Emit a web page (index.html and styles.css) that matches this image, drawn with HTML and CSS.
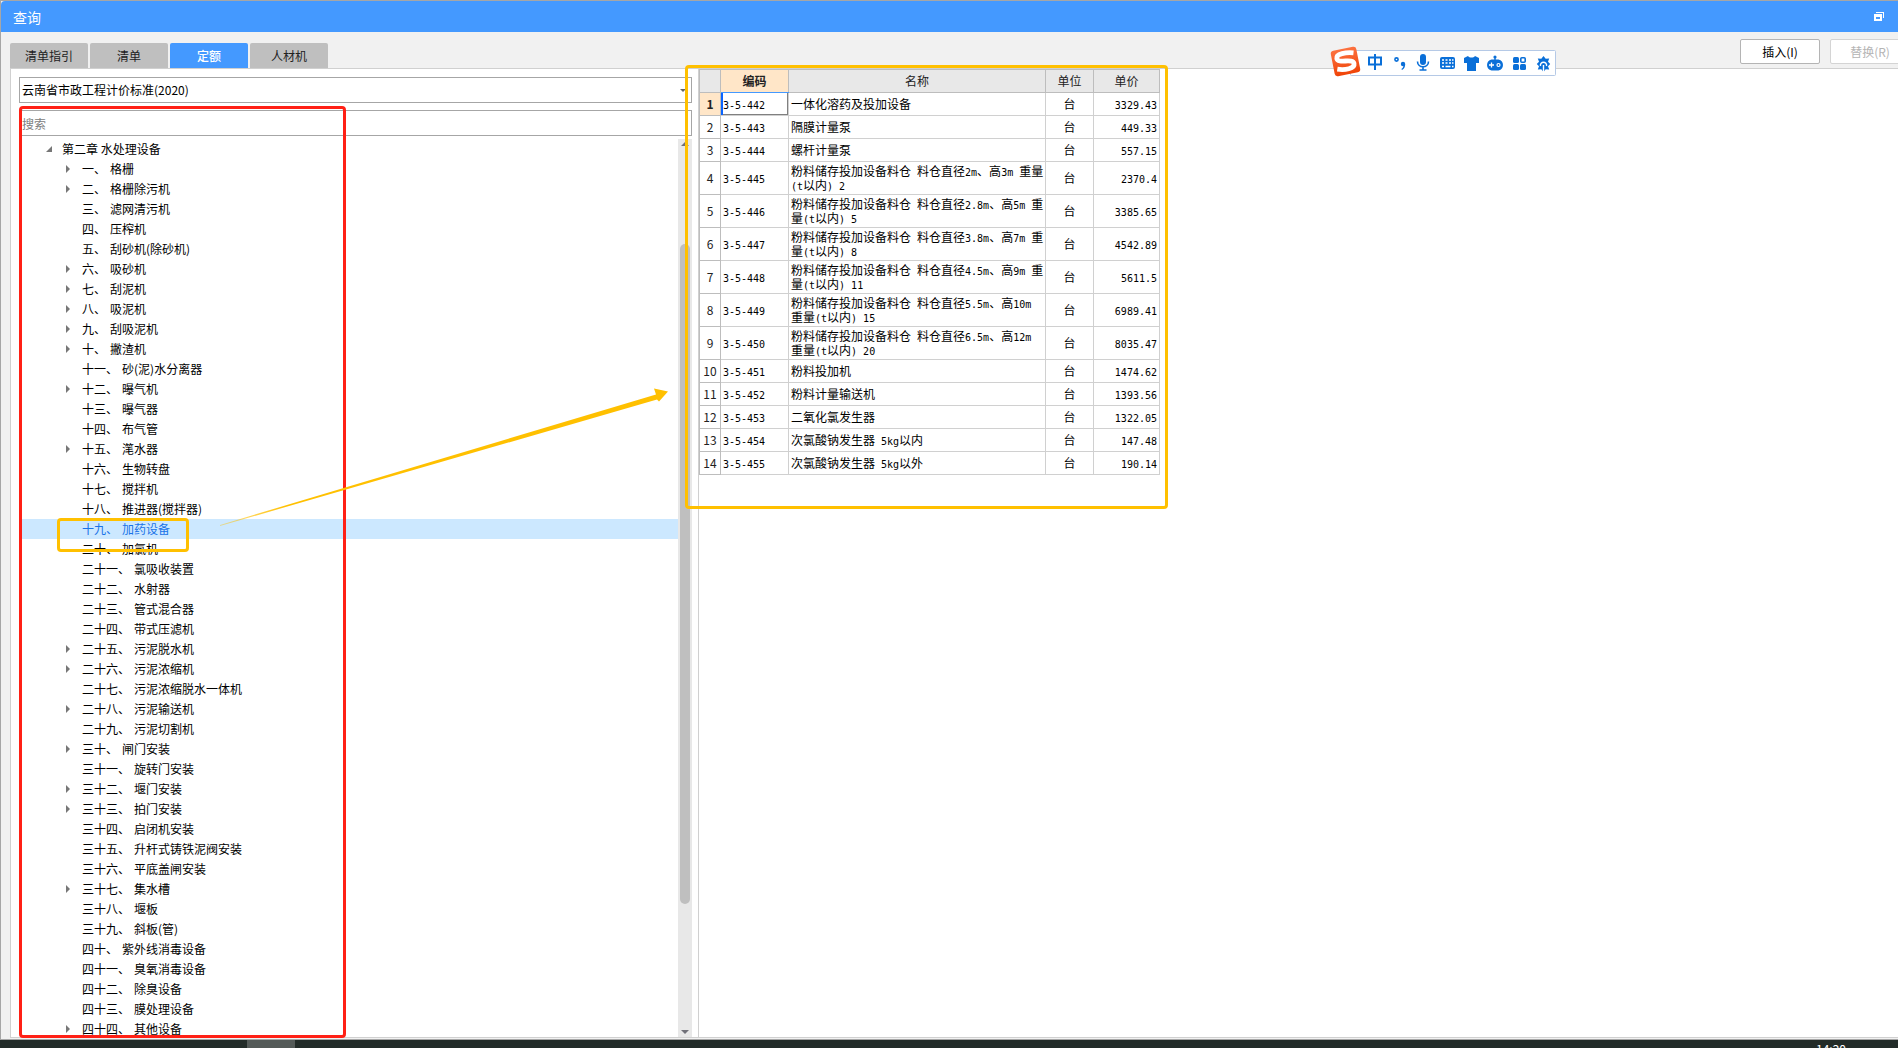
FILE: index.html
```html
<!DOCTYPE html>
<html lang="zh-CN">
<head>
<meta charset="utf-8">
<title>查询</title>
<link rel="stylesheet" href="styles.css">
</head>
<body>
<div class="window">
  <header class="titlebar">
    <h1 class="title">查询</h1>
    <button class="restore" type="button" aria-label="还原">
      <svg width="10" height="9" viewBox="0 0 10 9"><path d="M2 0h8v6H9V1H2z" fill="#fff"/><path d="M0 2h8v7H0zM2 5v2h4V5z" fill="#fff" fill-rule="evenodd"/></svg>
    </button>
  </header>

  <div class="toolbar">
    <nav class="tabs">
      <button class="tab" type="button">清单指引</button>
      <button class="tab" type="button">清单</button>
      <button class="tab active" type="button">定额</button>
      <button class="tab" type="button">人材机</button>
    </nav>
    <div class="actions">
      <button class="action" type="button">插入(I)</button>
      <button class="action" type="button" disabled>替换(R)</button>
    </div>
  </div>

  <main class="panel">
    <section class="side">
      <div class="field">
        <select class="control" aria-label="定额库"><option>云南省市政工程计价标准(2020)</option></select>
        <i class="caret"></i>
      </div>
      <input class="control search" type="text" placeholder="搜索" aria-label="搜索">
      <div class="tree-area">
        <ul class="tree">
          <li class="node root">第二章 水处理设备</li>
          <li class="node branch"><span>一、</span><span>格栅</span></li>
          <li class="node branch"><span>二、</span><span>格栅除污机</span></li>
          <li class="node"><span>三、</span><span>滤网清污机</span></li>
          <li class="node"><span>四、</span><span>压榨机</span></li>
          <li class="node"><span>五、</span><span>刮砂机(除砂机)</span></li>
          <li class="node branch"><span>六、</span><span>吸砂机</span></li>
          <li class="node branch"><span>七、</span><span>刮泥机</span></li>
          <li class="node branch"><span>八、</span><span>吸泥机</span></li>
          <li class="node branch"><span>九、</span><span>刮吸泥机</span></li>
          <li class="node branch"><span>十、</span><span>撇渣机</span></li>
          <li class="node"><span>十一、</span><span>砂(泥)水分离器</span></li>
          <li class="node branch"><span>十二、</span><span>曝气机</span></li>
          <li class="node"><span>十三、</span><span>曝气器</span></li>
          <li class="node"><span>十四、</span><span>布气管</span></li>
          <li class="node branch"><span>十五、</span><span>滗水器</span></li>
          <li class="node"><span>十六、</span><span>生物转盘</span></li>
          <li class="node"><span>十七、</span><span>搅拌机</span></li>
          <li class="node"><span>十八、</span><span>推进器(搅拌器)</span></li>
          <li class="node selected"><span>十九、</span><span>加药设备</span></li>
          <li class="node"><span>二十、</span><span>加氯机</span></li>
          <li class="node"><span>二十一、</span><span>氯吸收装置</span></li>
          <li class="node"><span>二十二、</span><span>水射器</span></li>
          <li class="node"><span>二十三、</span><span>管式混合器</span></li>
          <li class="node"><span>二十四、</span><span>带式压滤机</span></li>
          <li class="node branch"><span>二十五、</span><span>污泥脱水机</span></li>
          <li class="node branch"><span>二十六、</span><span>污泥浓缩机</span></li>
          <li class="node"><span>二十七、</span><span>污泥浓缩脱水一体机</span></li>
          <li class="node branch"><span>二十八、</span><span>污泥输送机</span></li>
          <li class="node"><span>二十九、</span><span>污泥切割机</span></li>
          <li class="node branch"><span>三十、</span><span>闸门安装</span></li>
          <li class="node"><span>三十一、</span><span>旋转门安装</span></li>
          <li class="node branch"><span>三十二、</span><span>堰门安装</span></li>
          <li class="node branch"><span>三十三、</span><span>拍门安装</span></li>
          <li class="node"><span>三十四、</span><span>启闭机安装</span></li>
          <li class="node"><span>三十五、</span><span>升杆式铸铁泥阀安装</span></li>
          <li class="node"><span>三十六、</span><span>平底盖闸安装</span></li>
          <li class="node branch"><span>三十七、</span><span>集水槽</span></li>
          <li class="node"><span>三十八、</span><span>堰板</span></li>
          <li class="node"><span>三十九、</span><span>斜板(管)</span></li>
          <li class="node"><span>四十、</span><span>紫外线消毒设备</span></li>
          <li class="node"><span>四十一、</span><span>臭氧消毒设备</span></li>
          <li class="node"><span>四十二、</span><span>除臭设备</span></li>
          <li class="node"><span>四十三、</span><span>膜处理设备</span></li>
          <li class="node branch"><span>四十四、</span><span>其他设备</span></li>
        </ul>
        <div class="scrollbar"><i class="up"></i><i class="thumb"></i><i class="down"></i></div>
      </div>
    </section>

    <section class="content">
      <table class="grid">
        <colgroup><col class="c-idx"><col class="c-code"><col class="c-name"><col class="c-unit"><col class="c-price"></colgroup>
        <thead>
          <tr><th></th><th class="current">编码</th><th>名称</th><th>单位</th><th>单价</th></tr>
        </thead>
        <tbody>
          <tr><th class="current">1</th><td class="focus"><b>3-5-442</b></td><td>一体化溶药及投加设备</td><td>台</td><td><b>3329.43</b></td></tr>
          <tr><th>2</th><td><b>3-5-443</b></td><td>隔膜计量泵</td><td>台</td><td><b>449.33</b></td></tr>
          <tr><th>3</th><td><b>3-5-444</b></td><td>螺杆计量泵</td><td>台</td><td><b>557.15</b></td></tr>
          <tr class="tall"><th>4</th><td><b>3-5-445</b></td><td>粉料储存投加设备料仓<b> </b>料仓直径<b>2m</b>、高<b>3m </b>重量<br><b>(t</b>以内<b>) 2</b></td><td>台</td><td><b>2370.4</b></td></tr>
          <tr class="tall"><th>5</th><td><b>3-5-446</b></td><td>粉料储存投加设备料仓<b> </b>料仓直径<b>2.8m</b>、高<b>5m </b>重<br>量<b>(t</b>以内<b>) 5</b></td><td>台</td><td><b>3385.65</b></td></tr>
          <tr class="tall"><th>6</th><td><b>3-5-447</b></td><td>粉料储存投加设备料仓<b> </b>料仓直径<b>3.8m</b>、高<b>7m </b>重<br>量<b>(t</b>以内<b>) 8</b></td><td>台</td><td><b>4542.89</b></td></tr>
          <tr class="tall"><th>7</th><td><b>3-5-448</b></td><td>粉料储存投加设备料仓<b> </b>料仓直径<b>4.5m</b>、高<b>9m </b>重<br>量<b>(t</b>以内<b>) 11</b></td><td>台</td><td><b>5611.5</b></td></tr>
          <tr class="tall"><th>8</th><td><b>3-5-449</b></td><td>粉料储存投加设备料仓<b> </b>料仓直径<b>5.5m</b>、高<b>10m</b><br>重量<b>(t</b>以内<b>) 15</b></td><td>台</td><td><b>6989.41</b></td></tr>
          <tr class="tall"><th>9</th><td><b>3-5-450</b></td><td>粉料储存投加设备料仓<b> </b>料仓直径<b>6.5m</b>、高<b>12m</b><br>重量<b>(t</b>以内<b>) 20</b></td><td>台</td><td><b>8035.47</b></td></tr>
          <tr><th>10</th><td><b>3-5-451</b></td><td>粉料投加机</td><td>台</td><td><b>1474.62</b></td></tr>
          <tr><th>11</th><td><b>3-5-452</b></td><td>粉料计量输送机</td><td>台</td><td><b>1393.56</b></td></tr>
          <tr><th>12</th><td><b>3-5-453</b></td><td>二氧化氯发生器</td><td>台</td><td><b>1322.05</b></td></tr>
          <tr><th>13</th><td><b>3-5-454</b></td><td>次氯酸钠发生器<b> 5kg</b>以内</td><td>台</td><td><b>147.48</b></td></tr>
          <tr><th>14</th><td><b>3-5-455</b></td><td>次氯酸钠发生器<b> 5kg</b>以外</td><td>台</td><td><b>190.14</b></td></tr>
        </tbody>
      </table>
    </section>
  </main>
</div>

<footer class="taskbar"><span class="task"></span><time class="clock">14:20</time></footer>

<!-- floating input-method bar -->
<div class="ime">
  <svg width="228" height="32" viewBox="0 0 228 32">
    <defs><linearGradient id="flame" x1="0" y1="0" x2="0" y2="1"><stop offset="0" stop-color="#fc7240"/><stop offset="1" stop-color="#f04408"/></linearGradient></defs>
    <rect x="20.500" y="4.500" width="205" height="25" rx="1" fill="#fff" stroke="#b5c9e6"/>
    <g transform="rotate(-11 15.500 15.500)">
      <rect x="2.500" y="2.500" width="26" height="26" rx="3" fill="url(#flame)"/>
      <path d="M25 8.500C18 6.400 7.500 6 7.500 11C7.500 16.500 23.500 13.500 23.500 19C23.500 24.500 13 24 6 21.500" fill="none" stroke="#fff" stroke-width="4.800"/>
    </g>
    <g transform="translate(-10 1)">
      <g fill="none" stroke="#0a6fd8" stroke-width="2">
        <path d="M49 11.500h12v7H49zM55 8v16" transform="translate(0 -1)"/>
        <circle cx="76.500" cy="12.500" r="1.600" stroke-width="1.600"/>
        <path d="M97.500 14.500c0 7 11 7 11 0M103 20v3M99.500 23h7" stroke-width="1.600"/>
      </g>
      <g fill="#0a6fd8">
        <circle cx="83" cy="17" r="2.200"/><path d="M85.200 17c0 3-1 5-3.200 6l-.6-1c1.400-.8 2-2 2-3.500z"/>
        <rect x="100" y="7" width="6" height="11" rx="3"/>
        <rect x="120" y="10" width="15" height="12" rx="2"/>
        <path d="M144 11l4-2c1.500 2 5.500 2 7 0l4 2v5h-3v8h-9v-8h-3z"/>
        <circle cx="175" cy="10" r="1.600"/><path d="M174.300 10h1.400v4h-1.400z"/><path d="M171.500 12.500h7c6 1 6 10 0 11h-7c-6-1-6-10 0-11z"/>
        <rect x="193" y="10" width="6" height="6" rx="1.500"/><rect x="193" y="17" width="6" height="6" rx="1.500"/><rect x="200" y="17" width="6" height="6" rx="1.500"/>
        <path d="M223.500 9l2.200 2.800 3.500-.4-1.200 3.300 2.200 2.300-2.200 2.300 1.200 3.300-3.500-.4-2.200 2.800-2.200-2.800-3.500.4 1.200-3.300-2.200-2.300 2.200-2.300-1.200-3.300 3.500.4z"/>
      </g>
      <rect x="200.800" y="10.800" width="4.400" height="4.400" rx="1" fill="none" stroke="#0a6fd8" stroke-width="1.600"/>
      <g fill="none" stroke="#fff">
        <path d="M122 13h2m1.500 0h2m1.500 0h2m1 0h1.500M122 16h2m1.500 0h2m1.500 0h2m1 0h1.500M122 19.500h2m1.500 0h5m1.500 0h1.500" stroke-width="1.500"/>
        <path d="M169 18h5M171.500 15.500v5" stroke-width="1.300"/><circle cx="178.500" cy="18" r="1.500" stroke-width="1.200"/>
        <path d="M223.500 25v-7M220.500 19c-1-5 7-5 6 0" stroke-width="1.400"/>
      </g>
    </g>
  </svg>
</div>

<!-- review marks drawn over the window -->
<div class="mark mark-tree"></div>
<div class="mark mark-item"></div>
<div class="mark mark-table"></div>
<svg class="arrow" width="450" height="145" viewBox="0 0 450 145">
  <defs><linearGradient id="fade"><stop offset="0" stop-color="#ffc000" stop-opacity="0.400"/><stop offset="0.150" stop-color="#ffc000"/></linearGradient></defs>
  <path d="M0 140L436 9.500L434 3.500L448 6.500L439 16.500L437 14.500L0 141Z" fill="url(#fade)"/>
</svg>
</body>
</html>
```

FILE: styles.css
```css
* { box-sizing: border-box; }

body {
  margin: 0;
  height: 100vh;
  display: flex;
  flex-direction: column;
  overflow: hidden;
  background: #f1f1f1;
  color: #000;
  font: 12px/20px "Noto Sans CJK SC", sans-serif;
}

button, input, select { font: inherit; color: inherit; }

.window {
  flex: 1;
  min-height: 0;
  display: flex;
  flex-direction: column;
  border: 1px solid #a6a6a6;
  border-right: 0;
  padding-bottom: 1px;
}

.titlebar {
  display: flex;
  align-items: center;
  justify-content: space-between;
  height: 31px;
  padding: 0 14px 0 12px;
  background: #4499ff;
  border-top-left-radius: 4px;
  color: #fff;
}
.title { margin: 0; font-size: 14px; font-weight: 400; }
.restore { display: flex; padding: 0; border: 0; background: none; }

.toolbar {
  display: flex;
  justify-content: space-between;
  align-items: flex-end;
  height: 36px;
  padding-left: 9px;
}
.tabs { display: flex; gap: 2px; }
.tab {
  width: 78px;
  height: 25px;
  padding: 0;
  border: 0;
  border-radius: 2px 2px 0 0;
  background: #bfbfbf;
  color: #222;
}
.tab.active { background: #4499ff; color: #fff; font-weight: 500; }

.actions { display: flex; gap: 10px; margin: 0 -12px 4px 0; }
.action {
  width: 80px;
  height: 25px;
  padding: 0;
  border: 1px solid #b4b4b4;
  border-radius: 2px;
  background: #fff;
}
.action:disabled { border-color: #d4d4d4; color: #b4b4b4; }

.panel {
  flex: 1;
  min-height: 0;
  display: flex;
  margin-left: 9px;
  border: 1px solid #d0d0d0;
  border-right: 0;
  background: #fff;
}

.side {
  flex: none;
  width: 688px;
  display: flex;
  flex-direction: column;
  padding: 8px 6px 0 8px;
  border-right: 1px solid #d0d0d0;
}
.field { position: relative; display: flex; margin-bottom: 7px; }
.control {
  width: 100%;
  height: 26px;
  padding: 0 2px;
  border: 1px solid #a6a6a6;
  border-radius: 0;
  background: #fff;
  appearance: none;
}
.search::placeholder { color: #808080; }
.search { margin-bottom: 3px; }
.caret {
  position: absolute;
  right: 6px;
  top: 12px;
  border: 3px solid transparent;
  border-top-color: #666;
  border-bottom: 0;
}

.tree-area { flex: 1; min-height: 0; display: flex; }
.tree { flex: 1; margin: 0; padding: 0; overflow: hidden; list-style: none; }
.node {
  display: flex;
  align-items: center;
  gap: 4px;
  height: 20px;
  padding-left: 63px;
}
.node.root { gap: 10px; padding-left: 27px; }
.root::before {
  content: "";
  border: 3px solid #777;
  border-top-color: transparent;
  border-left-color: transparent;
}
.node.branch { padding-left: 47px; }
.branch::before {
  content: "";
  margin-right: 8px;
  border: 4px solid transparent;
  border-left-color: #777;
  border-right: 0;
}
.selected { background: #cce8ff; color: #1a73e8; }

.scrollbar {
  display: flex;
  flex-direction: column;
  align-items: center;
  width: 14px;
  padding: 3px 0;
  background: #e8e8e8;
}
.up, .down { border: 4px solid transparent; }
.up { border-top: 0; border-bottom-color: #707078; }
.down { border-bottom: 0; border-top-color: #707078; margin-top: auto; }
.thumb {
  width: 10px;
  height: 74%;
  margin-top: 98px;
  border-radius: 5px;
  background: #bfbfbf;
}

.content { flex: 1; min-width: 0; }
.grid {
  table-layout: fixed;
  width: 461px;
  border-collapse: collapse;
  line-height: 14px;
  white-space: nowrap;
}
.c-idx { width: 21px; }
.c-code { width: 68px; }
.c-name { width: 257px; }
.c-unit { width: 48px; }
.c-price { width: 66px; }
.grid th, .grid td { height: 23px; padding: 0 2px; border: 1px solid #d0d0d0; }
.grid th { border-color: #bdbdbd; font-weight: 400; color: #222; }
.grid thead th { background: #e8e8e8; }
.grid tbody th { padding: 0; }
.grid .tall td, .grid .tall th { height: 33px; }
.grid td:nth-child(4) { text-align: center; }
.grid td:last-child { text-align: right; }
.grid .current, .grid thead .current { background: #ffe6c8; font-weight: 700; }
.grid thead .current { border-bottom-color: #4499ff; }
.grid .focus { box-shadow: inset 2px 0 #0a64ff, inset -1px -1px #808080; }
/* half-width characters of the grid's fixed-pitch text */
.grid b {
  font: 10px/10px "DejaVu Sans Mono", monospace;
  white-space: pre;
}

.taskbar {
  display: flex;
  justify-content: space-between;
  height: 8px;
  padding: 0 52px 0 247px;
  overflow: hidden;
  background: #222b28;
}
.task { width: 48px; background: #545a58; }
.clock { color: #fff; line-height: 18px; }

.ime { position: absolute; left: 1330px; top: 46px; }
.ime svg { display: block; }

.mark { position: absolute; border: 3px solid #ffc000; border-radius: 4px; pointer-events: none; }
.mark-tree { left: 19px; top: 106px; width: 327px; bottom: 10px; border-color: #ff2015; }
.mark-item { left: 57px; top: 518px; width: 132px; height: 34px; }
.mark-table { left: 685px; top: 65px; width: 483px; height: 444px; }
.arrow { position: absolute; left: 220px; top: 385px; pointer-events: none; }
```
